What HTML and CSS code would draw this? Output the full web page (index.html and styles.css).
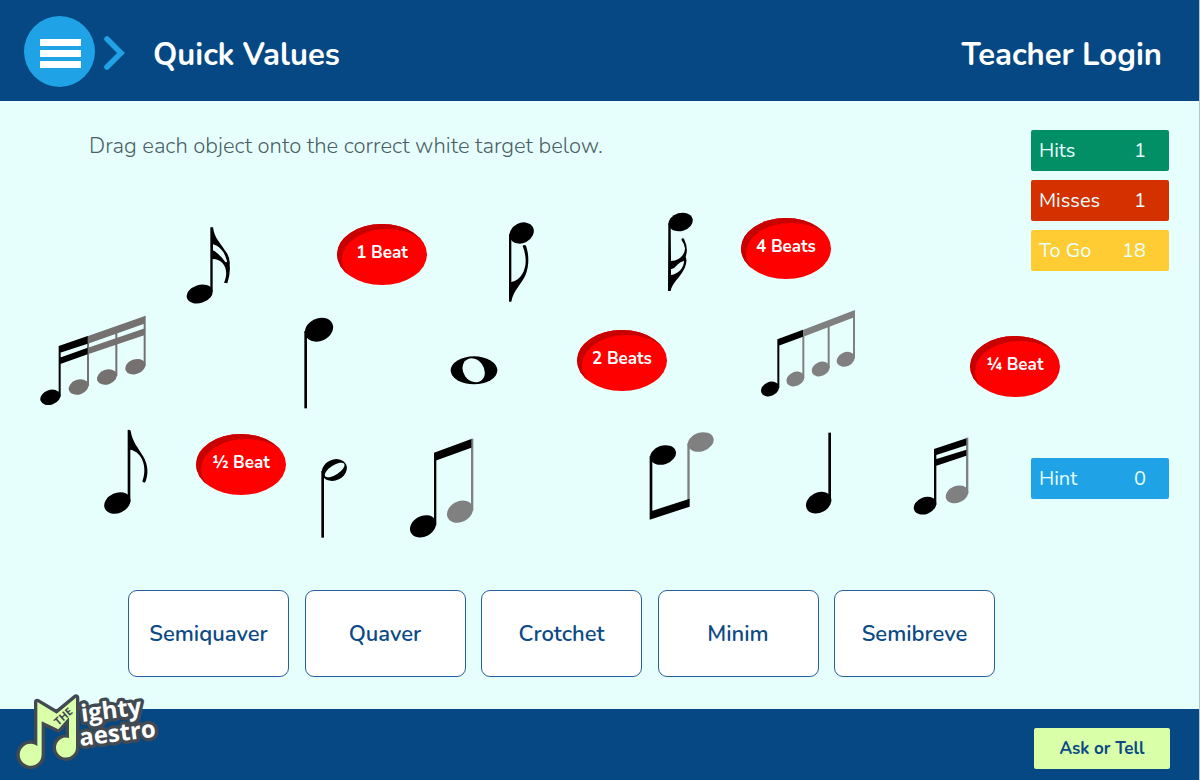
FILE: index.html
```html
<!DOCTYPE html>
<html lang="en">
<head>
<meta charset="utf-8">
<meta name="viewport" content="width=device-width, initial-scale=1">
<title>Quick Values – The Mighty Maestro</title>
<link rel="stylesheet" href="styles.css">
</head>
<body class="page">
<header class="header">
  <button class="menu" type="button" aria-label="Menu">
    <svg class="menu-icon" viewBox="0 0 71 71" aria-hidden="true"><circle cx="35.5" cy="35.5" r="35.5" fill="#1fa3e6"/><path d="M16 23h41v7H16zM16 34h41v7H16zM16 45h41v7H16z" fill="#fff"/></svg>
  </button>
  <svg class="chevron" viewBox="0 0 21 34" aria-hidden="true"><path d="M3 3l14 14L3 31" fill="none" stroke="#1fa3e6" stroke-width="5.5" stroke-linecap="round" stroke-linejoin="miter"/></svg>
  <h1 class="title">Quick Values</h1>
  <a class="login" href="#login">Teacher Login</a>
</header>

<main class="main">
  <p class="instruction">Drag each object onto the correct white target below.</p>

  <section class="board" aria-label="Objects">
    <button class="item semiquaver-up" type="button" aria-label="Semiquaver">
      <svg viewBox="498 48 138 240"><ellipse cx="539" cy="252" rx="40" ry="27" transform="rotate(-18 539 252)"/><path d="M571 52h8C583 84 600 98 614 120Q632 142 629 165Q632 188 622 220L612 218C628 184 614 148 578 147V245H571ZM579 103V121C592 128 604 140 616 156Q624 160 619 147Q608 111 579 103Z"/></svg>
    </button>
    <button class="item semiquaver-four" type="button" aria-label="One of four semiquavers">
      <svg viewBox="57 315 324 273"><g class="grey-warm"><ellipse cx="176" cy="531" rx="31" ry="22" transform="rotate(-20 176 531)"/><ellipse cx="261" cy="501" rx="31" ry="22" transform="rotate(-20 261 501)"/><ellipse cx="346" cy="470" rx="31" ry="22" transform="rotate(-20 346 470)"/><path d="M201 378h6v150h-6zM286 360h6v138h-6zM371 320h6v148h-6zM204 378L377 317V340L204 401ZM204 413L377 354V374L204 433Z"/></g><ellipse cx="91" cy="562" rx="31" ry="22" transform="rotate(-20 91 562)"/><path d="M116 408h6v152h-6zM116 408L203 378V401L116 430ZM119 443L203 413V433L119 463Z"/></svg>
    </button>
    <button class="item beat one-beat" type="button">1 Beat</button>
    <button class="item quaver-down" type="button" aria-label="Quaver, stem down">
      <svg viewBox="684 33 81 246"><ellipse cx="725" cy="69" rx="38" ry="30" transform="rotate(-27 725 69)"/><path d="M687 72h7V216C724 210 738 178 737 150Q736 128 728 108Q732 102 738 107C747 132 748 168 737 194C724 224 700 240 694 275H687Z"/></svg>
    </button>
    <button class="item semiquaver-down" type="button" aria-label="Semiquaver, stem down">
      <svg viewBox="351 33 81 243"><ellipse cx="392" cy="66" rx="37" ry="27" transform="rotate(-16 392 66)"/><path d="M355 70h7L363 183C386 182 404 167 405 145Q403 131 394 119Q396 113 402 116Q413 140 410 158L407 171Q413 183 404 204C392 232 366 248 362 273H354ZM363 208V225C385 221 402 204 402 182Q389 187 382 194Q375 204 363 208Z"/></svg>
    </button>
    <button class="item beat four-beats" type="button">4 Beats</button>
    <button class="item crotchet-down" type="button" aria-label="Crotchet, stem down">
      <svg viewBox="69 318 93 279"><ellipse cx="117" cy="359" rx="44" ry="34" transform="rotate(-25 117 359)"/><path d="M73 363h8v232h-8z"/></svg>
    </button>
    <button class="item semibreve" type="button" aria-label="Semibreve">
      <svg viewBox="510 435 144 90"><ellipse cx="582" cy="481" rx="70" ry="42"/><ellipse class="hole" cx="581" cy="481" rx="38" ry="31" transform="rotate(55 581 481)"/></svg>
    </button>
    <button class="item beat two-beats" type="button">2 Beats</button>
    <button class="item quaver-four" type="button" aria-label="One of four quavers">
      <svg viewBox="30 27 288 267"><g class="grey"><ellipse cx="136" cy="237" rx="28" ry="21" transform="rotate(-25 136 237)"/><ellipse cx="212" cy="207" rx="28" ry="21" transform="rotate(-25 212 207)"/><ellipse cx="287" cy="178" rx="28" ry="21" transform="rotate(-25 287 178)"/><path d="M157 90h6v143h-6zM233 70h6v134h-6zM309 34h6v141h-6zM160 89L315 30V51L160 110Z"/></g><ellipse cx="60" cy="267" rx="28" ry="21" transform="rotate(-25 60 267)"/><path d="M82 118h6v146h-6zM82 118L159 89V110L82 139Z"/></svg>
    </button>
    <button class="item beat quarter-beat" type="button">¼ Beat</button>
    <button class="item quaver-up" type="button" aria-label="Quaver">
      <svg viewBox="39 27 138 258"><ellipse cx="82" cy="249" rx="41" ry="30" transform="rotate(-24 82 249)"/><path d="M113 30Q118 28 122 32C126 64 145 84 159 108C176 137 175 164 166 186Q161 190 157 184C173 142 157 96 121 89V246H113Z"/></svg>
    </button>
    <button class="item beat half-beat" type="button">½ Beat</button>
    <button class="item minim-down" type="button" aria-label="Minim, stem down">
      <svg viewBox="690 114 84 243"><ellipse cx="733" cy="150" rx="39" ry="31" transform="rotate(-26 733 150)"/><ellipse class="hole" cx="734" cy="150" rx="34" ry="14" transform="rotate(-33 734 150)"/><path d="M694 153h8v200h-8z"/></svg>
    </button>
    <button class="item quaver-pair" type="button" aria-label="First of two quavers">
      <svg viewBox="27 54 195 303"><g class="grey"><ellipse cx="180" cy="275" rx="41" ry="31" transform="rotate(-28 180 275)"/><path d="M213 56h7v216h-7z"/></g><ellipse cx="69" cy="319" rx="41" ry="31" transform="rotate(-28 69 319)"/><path d="M102 98h7v218h-7zM102 98L214 57V83L102 124Z"/></svg>
    </button>
    <button class="item quaver-pair-down" type="button" aria-label="First of two quavers, stems down">
      <svg viewBox="747 33 198 267"><g class="grey"><ellipse cx="902" cy="66" rx="40" ry="28" transform="rotate(-18 902 66)"/><path d="M862 70h7v170h-7z"/></g><ellipse cx="789" cy="105" rx="40" ry="28" transform="rotate(-18 789 105)"/><path d="M749 108h8v188h-8zM749 275L869 236V260L749 299Z"/></svg>
    </button>
    <button class="item crotchet-up" type="button" aria-label="Crotchet">
      <svg viewBox="45 36 81 246"><ellipse cx="86" cy="248" rx="40" ry="30" transform="rotate(-28 86 248)"/><path d="M115 38h8v208h-8z"/></svg>
    </button>
    <button class="item semiquaver-pair" type="button" aria-label="First of two semiquavers">
      <svg viewBox="369 51 168 237"><g class="grey"><ellipse cx="501" cy="223" rx="35" ry="25" transform="rotate(-22 501 223)"/><path d="M528 53h7v168h-7z"/></g><ellipse cx="405" cy="257" rx="35" ry="25" transform="rotate(-22 405 257)"/><path d="M432 87h7v168h-7zM432 87L529 55V76L432 107ZM437 118L529 89V107L437 138Z"/></svg>
    </button>
  </section>

  <aside class="scores">
    <div class="score hits"><span>Hits</span><span>1</span></div>
    <div class="score misses"><span>Misses</span><span>1</span></div>
    <div class="score to-go"><span>To Go</span><span>18</span></div>
    <button class="score hint" type="button"><span>Hint</span><span>0</span></button>
  </aside>

  <section class="targets" aria-label="Targets">
    <div class="target">Semiquaver</div>
    <div class="target">Quaver</div>
    <div class="target">Crotchet</div>
    <div class="target">Minim</div>
    <div class="target">Semibreve</div>
  </section>
</main>

<footer class="footer">
  <a class="logo" href="#home" aria-label="The Mighty Maestro">
    <svg class="logo-art" viewBox="48 36 426 234" aria-hidden="true">
      <path class="logo-note" d="M112 66L170 101L228 53V203A30 30 0 1 1 207 174V112L175 148L125 124V225A33 33 0 1 1 112 198Z"/>
      <text class="logo-the" transform="translate(175 138) rotate(-42)">THE</text>
      <text class="logo-word" transform="translate(246 126) rotate(-7)">ighty</text>
      <text class="logo-word" transform="translate(241 198) rotate(-7)">aestro</text>
    </svg>
  </a>
  <button class="ask" type="button">Ask or Tell</button>
</footer>
</body>
</html>
```
FILE: styles.css
```css
* { box-sizing: border-box; }

.page {
  margin: 0;
  min-height: 100vh;
  display: flex;
  flex-direction: column;
  background: #e6fffd;
  border-right: 1px solid #b4c8ca;
  font-family: "Nunito", "Noto Sans", sans-serif;
}

button { font-family: inherit; border: 0; padding: 0; cursor: pointer; }

.header {
  display: flex;
  align-items: center;
  min-height: 101px;
  padding: 2px 37px 0 24px;
  background: #054883;
  color: #fff;
}
.menu { width: 71px; height: 71px; border-radius: 50%; background: none; }
.menu-icon { display: block; width: 100%; }
.chevron { width: 21px; height: 34px; margin: 2px 0 0 9px; }
.title { margin: 0 0 0 28px; padding-top: 6px; font-size: 31px; line-height: 40px; font-weight: 700; }
.login { margin-left: auto; padding-top: 6px; color: #fff; font-size: 31px; line-height: 40px; font-weight: 700; text-decoration: none; }

.main {
  flex: 1;
  display: grid;
  grid-template-columns: 1fr 138px;
  grid-template-rows: 50px 410px auto;
  padding: 29px 30px 32px 0;
}
.instruction { margin: 0; padding-left: 89px; color: #4c5f66; font-size: 22px; line-height: 32px; font-weight: 350; }

.board { grid-row: 2; position: relative; }
.item { position: absolute; background: none; cursor: grab; }
.item svg { display: block; width: 100%; height: 100%; }
.grey { fill: #808080; }
.grey-warm { fill: #767171; }
.hole { fill: #e6fffd; }

.beat {
  width: 90px;
  height: 61px;
  padding-bottom: 5px;
  border-radius: 50%;
  background: #f00;
  box-shadow: inset 5px 5px 0 #c80000;
  color: #fff;
  font-size: 17px;
  font-weight: 700;
}
.one-beat { left: 337px; top: 44px; }
.four-beats { left: 741px; top: 38px; }
.two-beats { left: 577px; top: 150px; }
.quarter-beat { left: 970px; top: 156px; }
.half-beat { left: 196px; top: 254px; }

.semiquaver-up { left: 186px; top: 46px; width: 46px; height: 80px; }
.semiquaver-four { left: 39px; top: 135px; width: 108px; height: 91px; }
.quaver-down { left: 508px; top: 41px; width: 27px; height: 82px; }
.semiquaver-down { left: 667px; top: 31px; width: 27px; height: 81px; }
.crotchet-down { left: 303px; top: 136px; width: 31px; height: 93px; }
.semibreve { left: 450px; top: 175px; width: 48px; height: 30px; }
.quaver-four { left: 760px; top: 129px; width: 96px; height: 89px; }
.quaver-up { left: 103px; top: 249px; width: 46px; height: 86px; }
.minim-down { left: 320px; top: 278px; width: 28px; height: 81px; }
.quaver-pair { left: 409px; top: 258px; width: 65px; height: 101px; }
.quaver-pair-down { left: 649px; top: 251px; width: 66px; height: 89px; }
.crotchet-up { left: 805px; top: 252px; width: 27px; height: 82px; }
.semiquaver-pair { left: 913px; top: 257px; width: 56px; height: 79px; }

.scores {
  grid-column: 2;
  grid-row: 1 / 3;
  display: flex;
  flex-direction: column;
  gap: 9px;
}
.score {
  display: flex;
  justify-content: space-between;
  align-items: center;
  height: 41px;
  padding: 0 23px 0 8px;
  border-radius: 2px;
  color: #e6fffd;
  font-size: 20px;
}
.hits { background: #028f66; }
.misses { background: #d43000; }
.to-go { background: #ffcd33; }
.hint { margin-top: 178px; background: #1fa3e6; }

.targets {
  grid-column: 1 / 3;
  display: flex;
  justify-content: space-between;
  padding: 0 174px 0 128px;
}
.target {
  display: flex;
  align-items: center;
  justify-content: center;
  width: 161px;
  height: 87px;
  border: 1px solid #265f99;
  border-radius: 9px;
  background: #fff;
  color: #0b4a85;
  font-size: 22px;
  font-weight: 600;
}

.footer {
  position: relative;
  display: flex;
  align-items: center;
  justify-content: flex-end;
  min-height: 71px;
  padding: 8px 29px 0 0;
  background: #054883;
}
.logo { position: absolute; left: 16px; top: -17px; width: 142px; }
.logo-art { display: block; width: 100%; overflow: visible; }
.logo-note { fill: #d9ffa8; stroke: #414a52; stroke-width: 20; stroke-linejoin: round; paint-order: stroke; }
.logo-the { fill: #414a52; font: 700 32px "Open Sans", sans-serif; }
.logo-word { fill: #fff; stroke: #414a52; stroke-width: 20; stroke-linejoin: round; paint-order: stroke; font: 700 72px "Open Sans", sans-serif; }
.ask {
  width: 136px;
  height: 41px;
  border-radius: 2px;
  background: #d9ffa8;
  color: #0b4a85;
  font-size: 17px;
  font-weight: 700;
}
```
